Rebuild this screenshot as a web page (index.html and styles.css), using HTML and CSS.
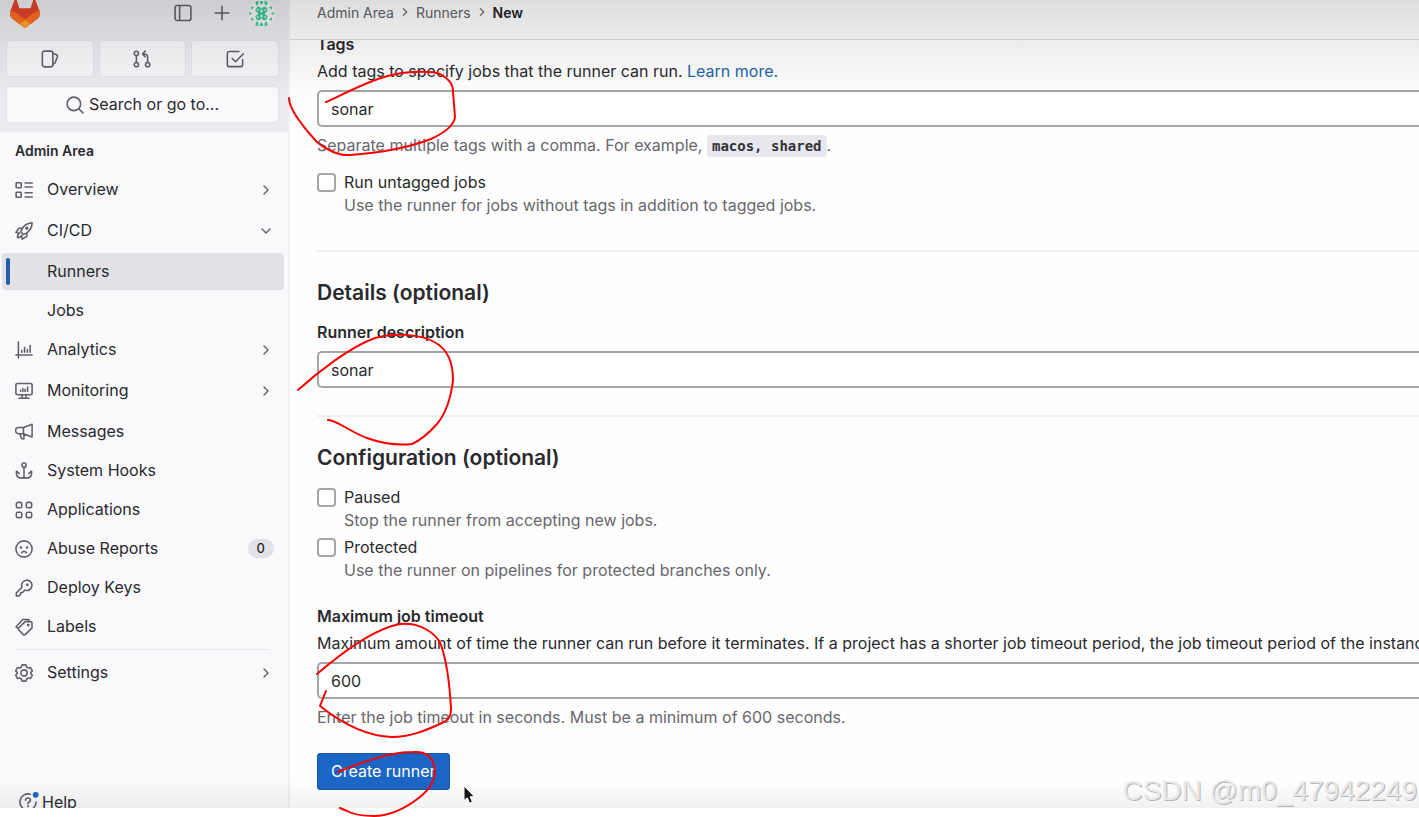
FILE: index.html
```html
<!DOCTYPE html>
<html lang="en">
<head>
<meta charset="utf-8">
<title>New runner · Admin Area · GitLab</title>
<link rel="stylesheet" href="styles.css">
</head>
<body>
<div class="app">
  <aside class="sidebar">
    <div class="sidebar-top">
      <div class="brand-row">
        <a class="brand" href="#" aria-label="GitLab home">
          <svg class="logo" viewBox="0 0 25 24"><path d="m24.507 9.5-.034-.09L21.082.562a.896.896 0 0 0-1.694.091l-2.29 7.01H7.825L5.535.653a.898.898 0 0 0-1.694-.09L.451 9.411.416 9.5a6.297 6.297 0 0 0 2.09 7.278l.012.01.03.022 5.16 3.867 2.56 1.935 1.554 1.176a1.051 1.051 0 0 0 1.268 0l1.555-1.176 2.56-1.935 5.197-3.89.014-.01A6.297 6.297 0 0 0 24.507 9.5Z" fill="#e24329"/><path d="m24.507 9.5-.034-.09a11.44 11.44 0 0 0-4.56 2.051l-7.447 5.632 4.742 3.584 5.197-3.89.014-.01A6.297 6.297 0 0 0 24.507 9.5Z" fill="#fc6d26"/><path d="m7.707 20.677 2.56 1.935 1.555 1.176a1.051 1.051 0 0 0 1.268 0l1.555-1.176 2.56-1.935-4.743-3.584-4.755 3.584Z" fill="#fca326"/><path d="M5.01 11.461a11.43 11.43 0 0 0-4.56-2.05L.416 9.5a6.297 6.297 0 0 0 2.09 7.278l.012.01.03.022 5.16 3.867 4.745-3.584-7.444-5.632Z" fill="#fc6d26"/></svg>
        </a>
        <button class="icon-btn" aria-label="Toggle sidebar"><svg class="icon" viewBox="0 0 16 16"><rect x="1" y="1.4" width="14" height="13.2" rx="1.8"/><path d="M5 1.5v13"/></svg></button>
        <button class="icon-btn" aria-label="Create new"><svg class="icon" viewBox="0 0 16 16"><path d="M8 2v12M2 8h12"/></svg></button>
        <button class="icon-btn" aria-label="User menu">
          <svg class="avatar" viewBox="0 0 26 26"><circle cx="13" cy="13" r="13" fill="#f3f5f5"/><g fill="#3fc89a"><path d="M8 7.500l2.500-1.500L13 8.500 15.500 6 18 7.500 19 10l-3 3 3 3-1 2.500-2.500 1.500L13 17.500 10.500 20 8 18.500 7 16l3-3-3-3z"/><path d="m7 2 3-1.500V4L8 5.500zm12 0-3-1.500V4l2 1.500zM7 24l3 1.500V22l-2-1.500zm12 0-3 1.500V22l2-1.500zM11.500 1h3v2L13 4.500 11.500 3zM11.500 25h3v-2L13 21.500 11.500 23zM1 11.500l3 1.500-3 1.500zm24 0L22 13l3 1.500zM3 6l3 1-3 2.500zm20 0-3 1 3 2.500zM3 20l3-1-3-2.500zm20 0-3-1 3-2.500z"/></g><path d="m13 9.200 1.400 1.400L13 12l-1.400-1.400zm0 4.800 1.400 1.400L13 16.800l-1.400-1.400zM9.500 8.500l1 1-1 1-1-1zm7 0 1 1-1 1-1-1zm-7 7 1 1-1 1-1-1zm7 0 1 1-1 1-1-1z" fill="#f3f5f5"/></svg>
        </button>
      </div>
      <div class="shortcuts">
        <button class="tile" aria-label="Issues"><svg class="icon" viewBox="0 0 16 16"><rect x="1.2" y="1" width="9.3" height="14" rx="1.8"/><path d="m10.8 3 3 1.2c.8.4 1.1 1.1.8 1.9l-2.200 5.400-1.700 1.300"/></svg></button>
        <button class="tile" aria-label="Merge requests"><svg class="icon" viewBox="0 0 16 16"><circle cx="3" cy="3" r="1.9"/><circle cx="3" cy="13" r="1.9"/><circle cx="13" cy="13" r="1.9"/><path d="M3 5v6M13 11V6.500c0-2-1-3-3-3H8.500M10.800 1 8.500 3.500 10.800 6"/></svg></button>
        <button class="tile" aria-label="To-do list"><svg class="icon" viewBox="0 0 16 16"><path d="M11.500 1.300H3A1.800 1.800 0 0 0 1.200 3v10A1.800 1.800 0 0 0 3 14.800h10a1.800 1.800 0 0 0 1.800-1.800V8.500M5.500 7.500l3 3L15.400 3.300"/></svg></button>
      </div>
      <button class="search"><svg class="icon" viewBox="0 0 16 16"><circle cx="7" cy="7" r="6"/><path d="m11.400 11.400 3.600 3.600"/></svg>Search or go to...</button>
    </div>
    <h2 class="nav-title">Admin Area</h2>
    <nav class="nav">
      <a class="nav-item group" href="#"><svg class="icon" viewBox="0 0 16 16"><rect x="1" y="1.500" width="4.500" height="4.500" rx=".6"/><rect x="1" y="10" width="4.500" height="4.500" rx=".6"/><path d="M9 1.800h6.300M9 5.300h6.300M9 10.500h6.300M9 14.200h6.300"/></svg><span>Overview</span><svg class="chevron" viewBox="0 0 12 12"><path d="m4 2 4 4-4 4"/></svg></a>
      <a class="nav-item group" href="#"><svg class="icon" viewBox="0 0 16 16"><path d="M5 8.500C7 3.500 10.500.9 15.200.8c0 4.700-2.700 8.200-7.500 10.400zM6.300 5.500H3.500L.8 9.300l3 .7M10.500 9.700v3l-4 2.600-.8-3.300M4.200 9.800c-1.600.5-2 2-2 4 1.800 0 3.200-.5 3.900-1.900"/><circle cx="10.500" cy="5.600" r=".8"/></svg><span>CI/CD</span><svg class="chevron" viewBox="0 0 12 12"><path d="m2 4 4 4 4-4"/></svg></a>
      <a class="nav-item sub active" href="#" aria-current="page"><span>Runners</span></a>
      <a class="nav-item sub" href="#"><span>Jobs</span></a>
      <a class="nav-item group" href="#"><svg class="icon" viewBox="0 0 16 16"><path d="M3 1v14M.800 12.500h14.400M6 10V8.500M8.500 10V5.500M11 10V7.500M13.500 10V4"/></svg><span>Analytics</span><svg class="chevron" viewBox="0 0 12 12"><path d="m4 2 4 4-4 4"/></svg></a>
      <a class="nav-item group" href="#"><svg class="icon" viewBox="0 0 16 16"><rect x=".8" y="1.300" width="14.400" height="10" rx="1.400"/><path d="M6.300 11.500v2.800M9.700 11.500v2.800M3.500 14.500h9M5 8.500V7.300M7 8.500V5.800M9 8.500V6.500M11.200 8.500V4.500"/></svg><span>Monitoring</span><svg class="chevron" viewBox="0 0 12 12"><path d="m4 2 4 4-4 4"/></svg></a>
      <a class="nav-item" href="#"><svg class="icon" viewBox="0 0 16 16"><path d="M7.500 4 15.200 1.200v11.300L7.500 9.500H3.200a2.700 2.700 0 0 1 0-5.500zM7.500 4v5.500M4.500 9.800l1.200 4 2.200.4v-4.200"/></svg><span>Messages</span></a>
      <a class="nav-item" href="#"><svg class="icon" viewBox="0 0 16 16"><circle cx="8" cy="2.800" r="1.900"/><path d="M8 4.800v9.700M1.300 11V8.200l2.400 2M14.700 11V8.200l-2.400 2M1.300 10c.2 3 2.300 4.300 4.200 4.300 1.300 0 2.200-.6 2.500-1.500.3.900 1.200 1.500 2.500 1.500 1.900 0 4-1.300 4.200-4.300"/></svg><span>System Hooks</span></a>
      <a class="nav-item" href="#"><svg class="icon" viewBox="0 0 16 16"><rect x="1.200" y="1.200" width="4.800" height="4.800" rx="1.300"/><rect x="10" y="1.200" width="4.800" height="4.800" rx="1.300"/><rect x="1.200" y="10" width="4.800" height="4.800" rx="1.300"/><rect x="10" y="10" width="4.800" height="4.800" rx="1.300"/></svg><span>Applications</span></a>
      <a class="nav-item" href="#"><svg class="icon" viewBox="0 0 16 16"><circle cx="8" cy="8" r="7.200"/><path d="M5.800 11.200c1.200-1.300 3.200-1.300 4.400 0M5 6l.8.900M4.900 7h.6M11 6l-.8.900M11.100 7h-.6"/></svg><span>Abuse Reports</span><span class="badge">0</span></a>
      <a class="nav-item" href="#"><svg class="icon" viewBox="0 0 16 16"><path d="M6.200 7.300a4.600 4.600 0 1 1 2.600 2.600L6.700 12H5v1.600L3.700 15H1.200v-2.700z"/><circle cx="11" cy="5.200" r=".6"/></svg><span>Deploy Keys</span></a>
      <a class="nav-item" href="#"><svg class="icon" viewBox="0 0 16 16"><path d="M9 3.200h4.800a1.300 1.300 0 0 1 1.300 1.300v4.300l-6 6a1.200 1.200 0 0 1-1.700 0L3.300 10.600a1.200 1.200 0 0 1 0-1.700zM3 9.300.9 7.800 7 1.300h5.300v1.500"/><circle cx="11.800" cy="6.300" r=".6"/></svg><span>Labels</span></a>
      <hr class="nav-line">
      <a class="nav-item group" href="#"><svg class="icon" viewBox="0 0 16 16"><path d="M6.300.8h3.400l.6 1.900 1.500.9 2-.4 1.600 2.900L14 7.600v.8l1.400 1.500-1.600 2.900-2-.4-1.500.9-.6 1.900H6.300l-.6-1.900-1.500-.9-2 .4L.6 9.900 2 8.400v-.8L.6 6.100l1.600-2.900 2 .4 1.500-.9z"/><circle cx="8" cy="8" r="2.800"/></svg><span>Settings</span><svg class="chevron" viewBox="0 0 12 12"><path d="m4 2 4 4-4 4"/></svg></a>
    </nav>
    <button class="help"><svg class="icon" viewBox="0 0 16 16"><path d="M10 1.100A7.200 7.200 0 1 0 15.200 8M5.800 6.300c.2-2.600 4.400-2.500 4.400 0 0 1.500-2.200 1.500-2.200 3.200M8 11.200v1"/><circle class="dot" cx="14.800" cy="1.600" r="2.600"/></svg>Help</button>
  </aside>

  <main class="main">
    <nav class="crumbs" aria-label="Breadcrumb">
      <a href="#">Admin Area</a><svg class="crumb-sep" viewBox="0 0 12 12"><path d="m4 2 4 4-4 4"/></svg><a href="#">Runners</a><svg class="crumb-sep" viewBox="0 0 12 12"><path d="m4 2 4 4-4 4"/></svg><a class="current" href="#" aria-current="page">New</a>
    </nav>
    <div class="scroller">
    <form class="form">
      <label class="label" for="tags">Tags</label>
      <p class="hint">Add tags to specify jobs that the runner can run. <a href="#">Learn more.</a></p>
      <input class="field" id="tags" type="text" value="sonar">
      <p class="note">Separate multiple tags with a comma. For example, <code>macos, shared</code>.</p>
      <div class="check first">
        <input type="checkbox" id="untagged"><label for="untagged">Run untagged jobs</label>
        <p>Use the runner for jobs without tags in addition to tagged jobs.</p>
      </div>
      <hr class="line spaced">
      <h2 class="section">Details (optional)</h2>
      <label class="label" for="desc">Runner description</label>
      <input class="field" id="desc" type="text" value="sonar">
      <hr class="line">
      <h2 class="section">Configuration (optional)</h2>
      <div class="check">
        <input type="checkbox" id="paused"><label for="paused">Paused</label>
        <p>Stop the runner from accepting new jobs.</p>
      </div>
      <div class="check next">
        <input type="checkbox" id="protected"><label for="protected">Protected</label>
        <p>Use the runner on pipelines for protected branches only.</p>
      </div>
      <label class="label apart" for="timeout">Maximum job timeout</label>
      <p class="hint">Maximum amount of time the runner can run before it terminates. If a project has a shorter job timeout period, the job timeout period of the instance</p>
      <input class="field" id="timeout" type="text" value="600">
      <p class="note">Enter the job timeout in seconds. Must be a minimum of 600 seconds.</p>
      <button class="primary" type="button">Create runner</button>
    </form>
    </div>
  </main>
  <div class="shade"></div>
</div>
<div class="watermark">CSDN @m0_47942249</div>
<svg class="marks" width="1419" height="817" viewBox="0 0 1419 817">
  <path d="M326 102C350 91 378 76 402 73C420 71 432 71 440 74C450 80 453 84 453 92L455 117C454 125 444 133 431 139C410 147 380 153 350 155C338 156 325 149 317 142C305 129 289 110 289 98"/>
  <path d="M298 390C318 372 350 347 375 338C393 333 420 333 436 343C448 350 453 363 453 380C451 398 446 413 437 424C428 434 419 441 412 444C395 446 378 442 367 438C352 433 335 419 328 420"/>
  <path d="M317 674C338 656 372 629 400 624C420 622 436 633 441 645C447 662 450 690 451 709C451 716 449 719 444 722C425 731 410 737 392 737C365 736 340 722 320 706L326 691"/>
  <path d="M338 772C365 761 390 752 413 752C427 751 434 757 435 772C434 781 431 788 420 797C406 808 390 816 374 816C363 816 354 815 347 811L340 808"/>
</svg>
<svg class="pointer" width="14" height="20" viewBox="0 0 14 20"><path d="M2 1v14.500l3.300-2.700 2.300 5.400 2.800-1.200-2.300-5.300h4.300z"/></svg>
</body>
</html>
```
FILE: styles.css
```css
* {
  box-sizing: border-box;
}

body {
  margin: 0;
  height: 100vh;
  overflow: hidden;
  position: relative;
  padding-bottom: 9px;
  background: #fff;
  color: #2a2a2e;
  font: 16px/23px Inter, "Liberation Sans", sans-serif;
}

h2, p, hr {
  margin: 0;
}

button, input {
  font: inherit;
  color: inherit;
}

button {
  border: 0;
  padding: 0;
  background: none;
}

a {
  color: inherit;
  text-decoration: none;
}

svg {
  display: block;
  flex: none;
}

.app {
  position: relative;
  display: grid;
  grid-template-columns: 290px minmax(0, 1fr);
  height: 100%;
  overflow: hidden;
}

.shade {
  position: absolute;
  inset: 0;
  pointer-events: none;
  background:
    linear-gradient(to bottom, rgba(0, 0, 0, .13), rgba(0, 0, 0, .07) 40px, rgba(0, 0, 0, .01) 88px, rgba(0, 0, 0, 0) 100px),
    linear-gradient(to top, rgba(0, 0, 0, .05), rgba(0, 0, 0, 0) 28px);
}

.icon {
  width: 18px;
  height: 18px;
}

.icon, .chevron, .crumb-sep {
  fill: none;
  stroke: #626168;
  stroke-width: 1.4;
  stroke-linecap: round;
  stroke-linejoin: round;
}

/* Sidebar */
.sidebar {
  display: flex;
  flex-direction: column;
  overflow: hidden;
  background: #f9f8fb;
  border-right: 2px solid #f0eff3;
}

.sidebar-top {
  padding: 0 9px 9px 6px;
  background: #ececf0;
}

.brand-row {
  display: flex;
  align-items: center;
  gap: 21px;
  height: 26px;
  padding: 0 4px 0 4px;
}

.brand {
  margin-right: auto;
}

.logo {
  width: 30px;
  height: 29px;
}

.avatar {
  width: 27px;
  height: 27px;
}

.icon-btn + .icon-btn:last-child {
  margin-left: -4px;
}

.shortcuts {
  display: grid;
  grid-template-columns: repeat(3, 1fr);
  gap: 5px;
  margin: 14px 0 9px;
}

.tile, .search {
  display: flex;
  align-items: center;
  justify-content: center;
  gap: 5px;
  width: 100%;
  height: 37px;
  border: 1px solid #e5e4e9;
  border-radius: 4px;
  background: #f8f7fa;
}

.search {
  background: #faf9fc;
}

.nav-title {
  padding: 8px 15px;
  font-size: 14px;
  line-height: 22px;
  font-weight: 600;
}

.nav {
  display: flex;
  flex-direction: column;
  gap: 2px;
  padding: 1px 4px 0 2px;
}

.nav-item {
  display: flex;
  align-items: center;
  gap: 14px;
  height: 37px;
  padding: 0 12px 0 13px;
  border-radius: 4px;
}

.group {
  margin-bottom: 2px;
}

.sub {
  padding-left: 45px;
}

.active {
  position: relative;
  background: #e2e2e6;
}

.active::before {
  content: "";
  position: absolute;
  left: 4px;
  top: 5px;
  bottom: 5px;
  width: 4px;
  border-radius: 2px;
  background: #1f5fae;
}

.chevron {
  width: 12px;
  height: 12px;
  margin-left: auto;
}

.badge {
  margin: 0 -2px 0 auto;
  padding: 0 9px;
  border-radius: 10px;
  background: #e2e2e6;
  font-size: 13px;
  line-height: 19px;
  font-weight: 500;
}

.nav-line {
  height: 1px;
  margin: 2px 14px 2px 13px;
  border: 0;
  background: #e7e6ea;
}

.help {
  display: flex;
  align-items: center;
  gap: 5px;
  margin: auto 0 -6px 19px;
  line-height: 24px;
}

.help .icon {
  overflow: visible;
}

.icon .dot {
  fill: #1f66b8;
  stroke: none;
}

/* Main column */
.main {
  display: flex;
  flex-direction: column;
  min-width: 0;
  overflow: hidden;
  background: #fefefe;
}

.crumbs {
  display: flex;
  align-items: center;
  gap: 6px;
  height: 40px;
  flex: none;
  padding: 0 27px 15px;
  border-bottom: 1px solid #dcdcdc;
  font-size: 14px;
  color: #626168;
}

.crumb-sep {
  width: 10px;
  height: 10px;
}

.current {
  color: #222226;
  font-weight: 600;
}

.scroller {
  flex: 1;
  overflow: hidden;
}

.form {
  margin-top: -7px;
  padding-left: 27px;
}

.label {
  display: block;
  font-weight: 600;
}

.label.apart {
  margin-top: 23px;
}

.hint {
  margin-top: 4px;
  white-space: nowrap;
}

.hint a {
  color: #1f66a8;
}

.field {
  display: block;
  width: 100%;
  height: 37px;
  margin: 7px 0;
  padding: 0 12px;
  border: 2px solid #a5a5a9;
  border-right: 0;
  border-radius: 5px 0 0 5px;
  background: #fff;
}

.note, .check p {
  color: #68676d;
}

code {
  padding: 3px 5px;
  border-radius: 4px;
  background: #e8e7ed;
  color: #333238;
  font: bold 14px/20px "DejaVu Sans Mono", monospace;
}

.check {
  display: grid;
  grid-template-columns: 19px 1fr;
  column-gap: 8px;
  align-items: center;
}

.check.first {
  margin-top: 14px;
}

.check.next {
  margin-top: 4px;
}

.check input {
  appearance: none;
  width: 19px;
  height: 19px;
  margin: 0;
  border: 2px solid #a5a5a9;
  border-radius: 4px;
  background: #fff;
}

.check p {
  grid-column: 2;
}

.line {
  height: 2px;
  margin: 27px 0;
  border: 0;
  background: #f0f0f2;
}

.line.spaced {
  margin-top: 33px;
}

.section {
  margin-bottom: 14px;
  font-size: 21px;
  line-height: 28px;
  font-weight: 600;
}

.primary {
  height: 37px;
  margin-top: 24px;
  padding: 0 14px;
  border-radius: 4px;
  background: #1b66c4;
  box-shadow: inset 0 0 0 1px #1a57a8;
  color: #fff;
}

/* Layers above the page */
.watermark {
  position: absolute;
  right: 2px;
  bottom: 10px;
  font: 28px/32px "Liberation Sans", Arial, sans-serif;
  color: #e8e8e8;
  text-shadow: 1px 1px 0 #b4b4b4;
}

.marks {
  position: absolute;
  left: 0;
  top: 0;
  pointer-events: none;
  fill: none;
  stroke: #fb0000;
  stroke-width: 2;
  stroke-linecap: round;
  stroke-linejoin: round;
}

.pointer {
  position: absolute;
  left: 462px;
  top: 785px;
  fill: #111;
  stroke: #fff;
  stroke-width: 1;
}
```
